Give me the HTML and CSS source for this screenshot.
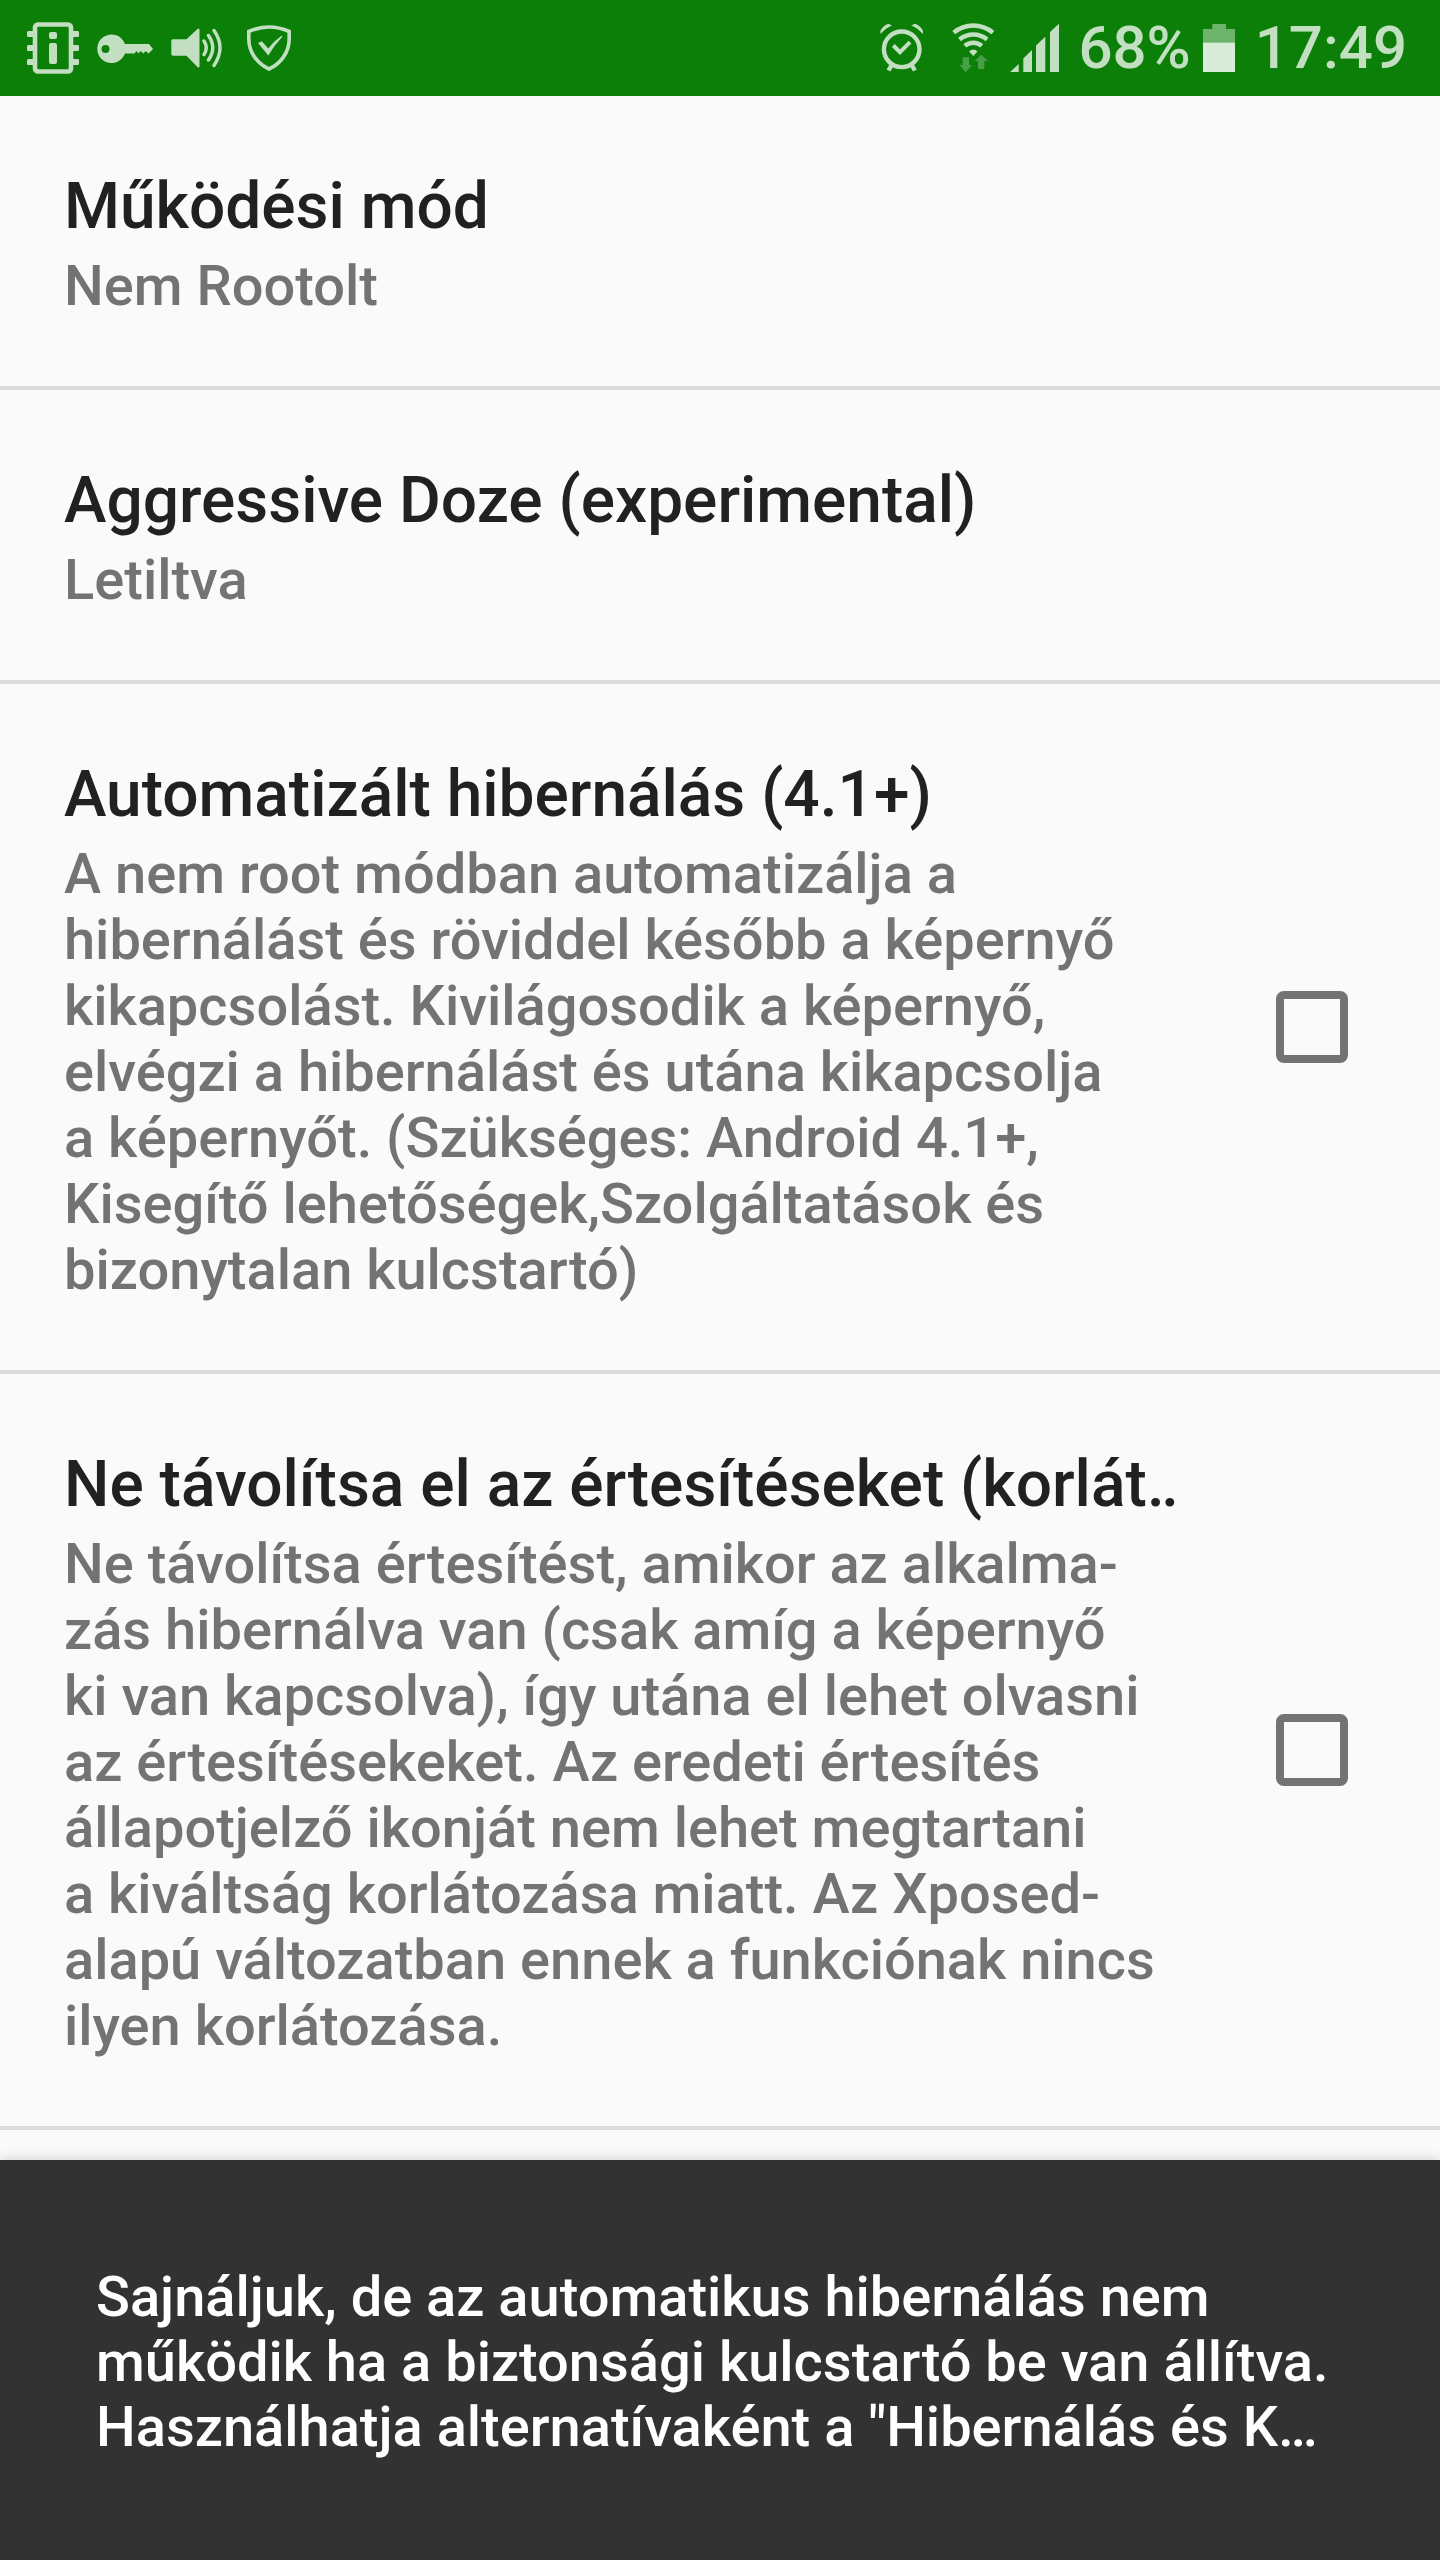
FILE: index.html
```html
<!DOCTYPE html>
<html lang="hu">
<head>
    <meta charset="UTF-8">
    <meta name="viewport" content="width=device-width, initial-scale=1.0">
    <title>Beállítások</title>
    <link rel="stylesheet" href="styles.css">
</head>
<body>

<header class="status-bar">
    <div class="notifications">
        <svg width="52" height="64" viewBox="0 0 52 64" aria-hidden="true">
            <rect x="8" y="8.5" width="36" height="47" rx="3" fill="none" stroke="currentColor" stroke-width="4.6"/>
            <path fill="currentColor" d="M1 15h5v6H1a1 1 0 0 1-1-1v-4zM1 29h5v6H1a1 1 0 0 1-1-1v-4zM1 43h5v6H1a1 1 0 0 1-1-1v-4zM46 15h5l1 1v4l-1 1h-5zM46 29h5l1 1v4l-1 1h-5zM46 43h5l1 1v4l-1 1h-5z"/>
            <rect x="22" y="16" width="8" height="7" rx="2" fill="currentColor"/>
            <rect x="22" y="27" width="8" height="21" rx="2" fill="currentColor"/>
        </svg>
        <svg width="56" height="64" viewBox="0 0 56 64" aria-hidden="true">
            <path fill="currentColor" fill-rule="evenodd" d="M28 28H52L56 33L51.5 37.5L48.5 35L46.5 37.5L43.5 35L41.5 37.5L39.5 35L37.5 37.5H28A14.3 14.3 0 1 1 28 28zM8.5 29a4 4 0 1 0 0 8a4 4 0 1 0 0-8z"/>
        </svg>
        <svg width="52" height="64" viewBox="0 0 52 64" aria-hidden="true">
            <path fill="currentColor" d="M2 23.3H15.5L26.5 13Q28.5 11.5 28.5 14V50Q28.5 52.5 26.5 51L15.5 39.7H2Q0.3 39.7 0.3 38V25Q0.3 23.3 2 23.3z"/>
            <path fill="none" stroke="currentColor" stroke-width="3.4" stroke-linecap="round" d="M33 25Q37.5 31.7 33 38.5M37.5 19.5Q46 31.7 37.5 44M43 14.5Q55 31.7 43 49.5"/>
        </svg>
        <svg width="56" height="64" viewBox="0 0 56 64" aria-hidden="true">
            <path fill="none" stroke="currentColor" stroke-width="3.6" d="M7.8 15.5Q28 6.5 48.2 15.5V23C48.2 37 39 48 28 53C17 48 7.8 37 7.8 23z"/>
            <path fill="currentColor" d="M17 27L20.8 25.3L27.3 32.5Q33 25 40.5 19.7L41.5 20.5Q33 29.5 27.3 39.5z"/>
        </svg>
    </div>
    <div class="system">
        <svg width="44" height="64" viewBox="0 0 44 64" aria-hidden="true">
            <g fill="none" stroke="currentColor" stroke-width="4.4">
                <circle cx="21.7" cy="33.3" r="17.8"/>
                <path d="M12 48.5L8.5 54.5M31.4 48.5L34.9 54.5"/>
                <path d="M13.3 29.5L20 36.2L30 26.2" stroke-width="4"/>
            </g>
            <path fill="currentColor" d="M0.7 18L0.3 15C2 11.5 5 8.5 8.5 7.7L12 9.5C8 11 4 14 0.7 18zM42.7 18L43.1 15C41.4 11.5 38.4 8.5 34.9 7.7L31.4 9.5C35.4 11 39.4 14 42.7 18z"/>
        </svg>
        <svg class="wifi" width="44" height="64" viewBox="0 0 44 64" aria-hidden="true">
            <g fill="none" stroke="currentColor" stroke-width="4.4">
                <path d="M1.7 16.6A30.5 30.5 0 0 1 40.9 16.6"/>
                <path d="M7.5 23.5A21.5 21.5 0 0 1 35.1 23.5"/>
                <path d="M12.8 29.9A13.2 13.2 0 0 1 29.8 29.9"/>
            </g>
            <path fill="currentColor" d="M17.1 35.5Q21.3 31.5 25.5 35.5L21.3 40z"/>
            <path class="traffic" d="M10.7 41.3H17V49H20L13.7 56.3L7.3 49H10.7zM29.3 38.7L36 45H32.3V53H26V45H22.7z"/>
        </svg>
        <svg class="signal" width="50" height="64" viewBox="0 0 50 64" aria-hidden="true">
            <path fill="currentColor" d="M0 56L8.7 48V56zM13.3 42.5L22 34V56H13.3zM26 29.5L35.3 20.7V56H26zM40 16L49 7.7V56H40z"/>
        </svg>
        <span class="percent">68%</span>
        <svg class="battery" width="32" height="64" viewBox="0 0 32 64" aria-hidden="true">
            <path class="battery-empty" d="M9.3 8H23V13H32V27H0V13H9.3z"/>
            <path class="battery-full" d="M0 26.7H32V56H0z"/>
        </svg>
        <time class="clock">17:49</time>
    </div>
</header>

<main class="settings">
    <button class="setting" type="button">
        <span class="text">
            <span class="title">Működési mód</span>
            <span class="summary">Nem Rootolt</span>
        </span>
    </button>

    <button class="setting" type="button">
        <span class="text">
            <span class="title">Aggressive Doze (experimental)</span>
            <span class="summary">Letiltva</span>
        </span>
    </button>

    <label class="setting" for="autoHibernate">
        <span class="text">
            <span class="title">Automatizált hibernálás (4.1+)</span>
            <span class="summary">A nem root módban automatizálja a<br>
                hibernálást és röviddel később a képernyő<br>
                kikapcsolást. Kivilágosodik a képernyő,<br>
                elvégzi a hibernálást és utána kikapcsolja<br>
                a képernyőt. (Szükséges: Android 4.1+,<br>
                Kisegítő lehetőségek,Szolgáltatások és<br>
                bizonytalan kulcstartó)</span>
        </span>
        <input type="checkbox" id="autoHibernate">
    </label>

    <label class="setting" for="keepNotifications">
        <span class="text">
            <span class="title">Ne távolítsa el az értesítéseket (korlát‥</span>
            <span class="summary">Ne távolítsa értesítést, amikor az alkalma‐<br>
                zás hibernálva van (csak amíg a képernyő<br>
                ki van kapcsolva), így utána el lehet olvasni<br>
                az értesítésekeket. Az eredeti értesítés<br>
                állapotjelző ikonját nem lehet megtartani<br>
                a kiváltság korlátozása miatt. Az Xposed‐<br>
                alapú változatban ennek a funkciónak nincs<br>
                ilyen korlátozása.</span>
        </span>
        <input type="checkbox" id="keepNotifications">
    </label>
</main>

<div class="snackbar" role="status">
    Sajnáljuk, de az automatikus hibernálás nem<br>
    működik ha a biztonsági kulcstartó be van állítva.<br>
    Használhatja alternatívaként a "Hibernálás és K…
</div>

</body>
</html>
```

FILE: styles.css
```css
* {
    box-sizing: border-box;
}
body {
    display: flex;
    flex-direction: column;
    height: 100vh;
    margin: 0;
    font-family: Roboto, "Noto Sans", sans-serif;
    font-weight: 500;
    background-color: #fafafa;
}

/* status bar */
.status-bar {
    display: flex;
    flex: none;
    justify-content: space-between;
    align-items: center;
    height: 96px;
    padding: 0 33px 0 27px;
    background-color: #0c7f08;
    color: #c2e0c1;
    font-size: 60px;
    line-height: 64px;
}
.status-bar svg {
    display: block;
}
.notifications {
    display: flex;
    gap: 18px;
}
.system {
    display: flex;
    align-items: center;
}
.wifi {
    margin-left: 28px;
}
.signal {
    margin-left: 14px;
}
.percent {
    margin-left: 18px;
}
.battery {
    margin-left: 12px;
}
.clock {
    margin-left: 20px;
}
.traffic {
    fill: #4aa048;
}
.battery-empty {
    fill: #6db36b;
}
.battery-full {
    fill: #d9ebd9;
}

/* settings list */
.settings {
    flex: 1;
    min-height: 0;
    overflow: hidden;
}
.setting {
    display: flex;
    align-items: center;
    justify-content: space-between;
    width: 100%;
    padding: 67px 92px 67px 64px;
    border: none;
    border-bottom: 4px solid #dcdcdc;
    background: none;
    font: inherit;
    text-align: left;
}
.title {
    display: block;
    font-size: 64px;
    line-height: 87px;
    color: #212121;
    white-space: nowrap;
}
.summary {
    display: block;
    margin-top: 3px;
    font-size: 56px;
    line-height: 66px;
    color: #737373;
}
input[type="checkbox"] {
    appearance: none;
    flex: none;
    width: 72px;
    height: 72px;
    margin: 0;
    border: 8px solid #737373;
    border-radius: 8px;
}
input[type="checkbox"]:checked {
    background-color: #737373;
}

/* message at the bottom */
.snackbar {
    flex: none;
    padding: 105px 96px 100px;
    background-color: #323232;
    box-shadow: 0 0 12px rgba(0, 0, 0, 0.2);
    color: #fff;
    font-size: 56px;
    line-height: 65px;
}
```
